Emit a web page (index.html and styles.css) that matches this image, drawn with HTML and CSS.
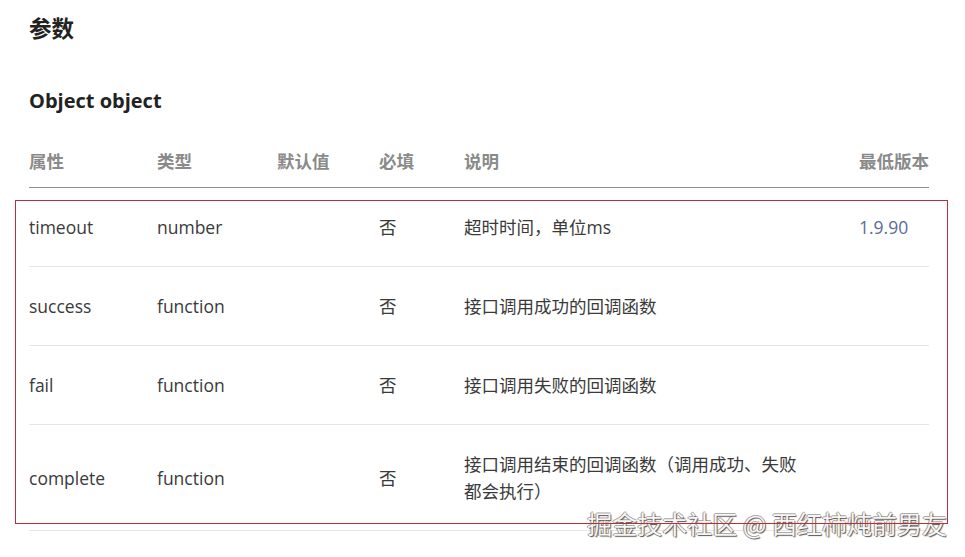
FILE: index.html
```html
<!DOCTYPE html>
<html lang="zh-CN">
<head>
<meta charset="utf-8">
<link rel="stylesheet" href="styles.css">
</head>
<body>
<div class="page">
  <h2 class="title">参数</h2>
  <h3 class="subtitle">Object object</h3>
  <table class="params">
    <colgroup>
      <col class="c-name"><col class="c-type"><col class="c-def"><col class="c-req"><col class="c-desc"><col class="c-ver">
    </colgroup>
    <thead>
      <tr><th>属性</th><th>类型</th><th>默认值</th><th>必填</th><th>说明</th><th>最低版本</th></tr>
    </thead>
    <tbody>
      <tr><td>timeout</td><td>number</td><td></td><td>否</td><td class="desc">超时时间，单位ms</td><td class="ver">1.9.90</td></tr>
      <tr><td>success</td><td>function</td><td></td><td>否</td><td class="desc">接口调用成功的回调函数</td><td></td></tr>
      <tr><td>fail</td><td>function</td><td></td><td>否</td><td class="desc">接口调用失败的回调函数</td><td></td></tr>
      <tr><td>complete</td><td>function</td><td></td><td>否</td><td class="desc">接口调用结束的回调函数（调用成功、失败都会执行）</td><td></td></tr>
    </tbody>
  </table>
  <div class="highlight"></div>
  <div class="watermark">掘金技术社区 @ 西红柿炖前男友</div>
</div>
</body>
</html>
```
FILE: styles.css
```css
* { box-sizing: border-box; }
html, body { margin: 0; padding: 0; background: #fff; }
body {
  font-family: "Open Sans", "Noto Sans CJK SC", sans-serif;
  color: #3a3a3a;
  font-size: 17.5px;
}
.page {
  position: relative;
  width: 965px;
  height: 557px;
  padding: 12px 36px 0 29px;
  overflow: hidden;
}
.title {
  margin: 0;
  font-size: 22.5px;
  line-height: 30px;
  font-weight: 700;
  color: #222;
  font-family: "Noto Sans CJK SC", sans-serif;
}
.subtitle {
  margin: 45px 0 0;
  font-size: 20px;
  line-height: 28px;
  font-weight: 700;
  color: #222;
  font-family: "Open Sans", "Noto Sans CJK SC", sans-serif;
}
.params {
  margin-top: 20px;
  width: 900px;
  border-collapse: collapse;
  table-layout: fixed;
}
.c-name { width: 128px; }
.c-type { width: 120px; }
.c-def { width: 102px; }
.c-req { width: 85px; }
.c-desc { width: 395px; }
.c-ver { width: 70px; }
.params th {
  text-align: left;
  font-weight: 700;
  color: #8a8a8a;
  line-height: 27px;
  padding: 12px 0 13px;
  border-bottom: 1px solid #8f8f8f;
  white-space: nowrap;
  font-family: "Noto Sans CJK SC", sans-serif;
}
.params td {
  line-height: 27px;
  padding: 26px 0 25px;
  border-bottom: 1px solid #e6e6e6;
  vertical-align: middle;
}
.params td.desc { padding-right: 55px; }
.params td.ver { color: #5c6a98; }
.highlight {
  position: absolute;
  left: 15px;
  top: 200px;
  width: 933px;
  height: 324px;
  border: 1px solid #b5313c;
  z-index: 2;
  pointer-events: none;
}
.watermark {
  position: absolute;
  right: 18px;
  top: 505px;
  font-size: 25px;
  line-height: 36px;
  color: #f6f6f6;
  font-family: "Noto Sans CJK SC", sans-serif;
  text-shadow: 1px 1px 1px #555, -1px 0 0 #999, 0 -1px 0 #aaa;
  z-index: 1;
  white-space: nowrap;
}
```
